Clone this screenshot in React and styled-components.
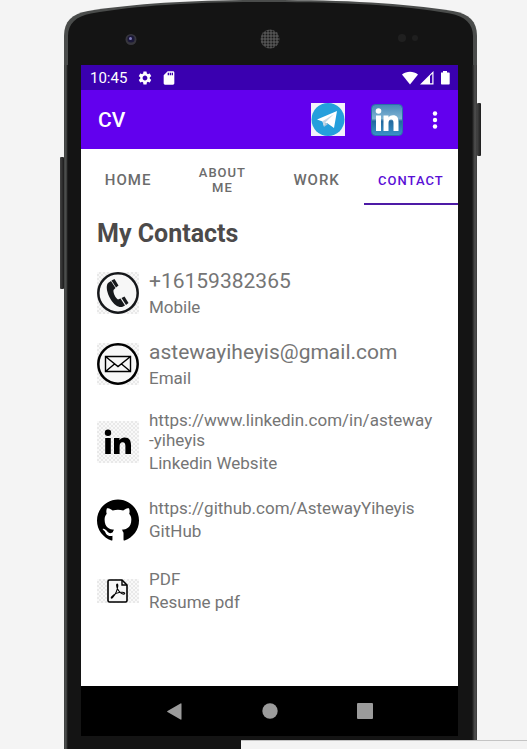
import React from "react";
import styled, { createGlobalStyle } from "styled-components";
import { MdSettings, MdSdCard } from "react-icons/md";

const GlobalStyle = createGlobalStyle`
  * { box-sizing: border-box; }
  body { margin: 0; background: #f4f4f4; font-family: Roboto, "Noto Sans", sans-serif; }
  button { font: inherit; border: 0; padding: 0; background: none; cursor: pointer; }
  h1, h2, p, ul { margin: 0; padding: 0; }
  svg { display: block; }
`;

const Page = styled.div`
  min-height: 100vh;
  display: flex;
  padding: 0 50px 0 64px;
  overflow: hidden;
`;

const Phone = styled.div`
  position: relative;
  flex: 1;
  min-width: 0;
  display: flex;
  flex-direction: column;
`;

const TopBezel = styled.svg`
  width: 100%;
  height: 65px;
  flex: none;
`;

const Frame = styled.div`
  flex: 1;
  display: flex;
  flex-direction: column;
  padding: 0 19px 13px 17px;
  background: linear-gradient(
    to right,
    #3c3e3d 0, #505251 2px, #2a2b2a 3px, #141414 4px,
    #141414 calc(100% - 5px), #2a2a2a calc(100% - 4px), #505050 calc(100% - 2px), #3a3a3a 100%
  );
`;

const SideKey = styled.span`
  position: absolute;
  width: 4px;
  top: ${(p) => p.$top}px;
  height: ${(p) => p.$height}px;
  ${(p) => p.$side}: -4px;
  background: linear-gradient(to right, #444, #1c1c1c);
  border-radius: 1px;
`;

const Screen = styled.main`
  flex: 1;
  display: flex;
  flex-direction: column;
  background: #fff;
`;

const StatusBar = styled.div`
  height: 25px;
  display: flex;
  align-items: center;
  padding: 0 8px 0 9px;
  background: #3a00b0;
  color: #fff;
  font-size: 15px;
`;

const StatusGroup = styled.div`
  display: flex;
  align-items: center;
  gap: ${(p) => p.$gap}px;
  margin-left: ${(p) => (p.$end ? "auto" : "10px")};
`;

const AppBar = styled.header`
  height: 59px;
  display: flex;
  align-items: center;
  padding: 0 11px 0 17px;
  background: #6200ee;
  color: #fff;
`;

const AppTitle = styled.h1`
  flex: 1;
  font-size: 21px;
  font-weight: 500;
`;

const ActionButton = styled.button`
  display: grid;
  place-items: center;
  color: #fff;
  margin-left: ${(p) => p.$gap}px;
`;

const Tabs = styled.nav`
  height: 56px;
  display: grid;
  grid-template-columns: repeat(4, 1fr);
`;

const Tab = styled.button`
  padding: 8px 14px 0;
  color: ${(p) => (p.$active ? "#5a0fd6" : "#6c6c6c")};
  border-bottom: 2px solid ${(p) => (p.$active ? "#4d1aa6" : "transparent")};
  font-size: ${(p) => (p.$small ? 13 : 15)}px;
  line-height: 15px;
  font-weight: 500;
  letter-spacing: 1px;
  white-space: ${(p) => (p.$wrap ? "normal" : "nowrap")};
  text-transform: uppercase;
`;

const Content = styled.section`
  flex: 1;
  padding: 14px 16px 16px;
`;

const Heading = styled.h2`
  font-size: 25px;
  line-height: 30px;
  font-weight: 700;
  color: #4c4a4a;
  margin-bottom: 19px;
`;

const ContactList = styled.ul`
  list-style: none;
  display: flex;
  flex-direction: column;
  gap: 22px;
`;

const ContactRow = styled.li`
  min-height: 49px;
  display: flex;
  align-items: center;
  gap: 10px;
`;

const IconTile = styled.span`
  flex: none;
  width: 42px;
  height: ${(p) => (p.$short ? 24 : 42)}px;
  display: grid;
  place-items: center;
  color: #000;
  background: ${(p) =>
    p.$plain ? "none" : "repeating-conic-gradient(#e9e9e9 0 25%, #f9f9f9 0 50%) 0 0 / 4px 4px"};
`;

const ContactText = styled.div`
  min-width: 0;
  display: flex;
  flex-direction: column;
  gap: 3px;
  color: #757575;
  font-size: 17px;
  line-height: 20px;
`;

const Value = styled.a`
  color: inherit;
  text-decoration: none;
  font-size: ${(p) => (p.$large ? 21 : 17)}px;
  line-height: ${(p) => (p.$large ? 26 : 20)}px;
`;

const KeepTogether = styled.span`
  white-space: nowrap;
`;

const NavBar = styled.div`
  height: 50px;
  display: grid;
  grid-template-columns: repeat(3, 1fr);
  padding: 0 46px;
  background: #000;
`;

const NavButton = styled.button`
  display: grid;
  place-items: center;
`;

const Panel = styled.div`
  position: fixed;
  left: 241px;
  right: 0;
  bottom: 0;
  height: 9px;
  background: #f3f3f3;
  border-top: 1px solid #c4c4c4;
`;

function Bezel() {
  return (
    <TopBezel viewBox="0 0 413 65" preserveAspectRatio="none" aria-hidden="true">
      <defs>
        <pattern id="mesh" width="3" height="3" patternUnits="userSpaceOnUse">
          <rect width="3" height="3" fill="#555" />
          <circle cx="1.5" cy="1.5" r="1" fill="#191919" />
        </pattern>
      </defs>
      <path d="M0 65V36C0 21 8 14 24 11 75 3 130 0 206 0S338 3 389 11C405 14 413 21 413 36V65Z" fill="#4a4c4b" />
      <path d="M4 65V36C4 24 12 16 27 13.500 77 5 132 2 206 2S336 5 386 13.500C401 16 409 24 409 36V65Z" fill="#141414" />
      <circle cx="67" cy="39.500" r="5.500" fill="#37363d" />
      <circle cx="67" cy="39" r="3.600" fill="#1b1838" />
      <circle cx="66.500" cy="38.500" r="1.500" fill="#7d79b5" />
      <circle cx="206" cy="39" r="9.500" fill="url(#mesh)" />
      <circle cx="338" cy="38" r="4" fill="#202020" />
      <circle cx="351" cy="38" r="3" fill="#1f1f1f" />
    </TopBezel>
  );
}

function TelegramIcon() {
  return (
    <svg width="34" height="33" viewBox="0 0 34 33" aria-hidden="true">
      <rect width="34" height="33" fill="#f3f2fa" />
      <circle cx="17" cy="16.500" r="16.500" fill="#259fdc" />
      <path d="M6 16.500 26 8 23 25 16 20 13 23 11.500 18.500Z" fill="#fff" />
      <path d="M11.500 18.300 23 11 14.300 19.500 13 24Z" fill="#c5d8e6" />
      <path d="M14.300 19.500 17 21 13 24Z" fill="#a7c4d8" />
    </svg>
  );
}

function LinkedinBadge() {
  return (
    <svg width="32" height="32" viewBox="0 0 32 32" aria-hidden="true">
      <defs>
        <linearGradient id="badge" x1="0" y1="0" x2="0" y2="1">
          <stop offset="0" stopColor="#4487b8" />
          <stop offset="0.450" stopColor="#7fb3d3" />
          <stop offset="0.540" stopColor="#22699f" />
          <stop offset="1" stopColor="#3a93c9" />
        </linearGradient>
      </defs>
      <rect x="0.500" y="0.500" width="31" height="31" rx="4" fill="url(#badge)" stroke="#2a70a8" />
      <circle cx="7.500" cy="7" r="2.800" fill="#fff" />
      <path d="M5 11.500h5V27H5zM12.500 11.500h5v2c1-1.500 2.500-2.300 4.500-2.300 4 0 5.500 2.600 5.500 6.800v9h-5v-8c0-2.300-.7-3.600-2.300-3.600-1.900 0-2.700 1.500-2.700 3.600v8h-5z" fill="#fff" />
    </svg>
  );
}

function LinkedinMark() {
  return (
    <svg width="28" height="26" viewBox="0 0 28 26" fill="#000" aria-hidden="true">
      <circle cx="4" cy="3.700" r="3.200" />
      <path d="M1.200 9h5.600v16H1.200zM10 9h5.500v2.200c1-1.700 3-2.700 5-2.700 5 0 6.500 3.300 6.500 7.700V25h-5.600v-7.700c0-2.300-.5-4.100-2.700-4.100-2.300 0-3.100 1.700-3.100 4.100V25H10z" />
    </svg>
  );
}

function PhoneIcon() {
  return (
    <svg width="42" height="42" viewBox="0 0 42 42" aria-hidden="true">
      <circle cx="21" cy="21" r="19.700" fill="#f7f7f7" stroke="#15171a" strokeWidth="2.500" />
      <g fill="#17191c">
        <path d="M14 9 11 11C8.500 14 10 21 13.500 27S21 35.500 25 35L28 33.500 23.500 26.500 21 27.500C18.500 26 16 21 16.500 18L18.500 16Z" />
        <path d="M14.500 8.500 17.500 7 21.500 13.500 19 15.500Z" />
        <path d="M24.500 26 27.500 24.500 31.500 31 29 33Z" />
      </g>
    </svg>
  );
}

function MailIcon() {
  return (
    <svg width="42" height="42" viewBox="0 0 42 42" fill="none" stroke="#000" aria-hidden="true">
      <circle cx="21" cy="21" r="19.700" fill="#f7f7f7" strokeWidth="2.500" />
      <path d="M8.500 13.500h25v15h-25zM8.500 13.500 21 23.500 33.500 13.500M8.500 28.500 17.500 21M33.500 28.500 24.500 21" strokeWidth="1.400" />
    </svg>
  );
}

function GithubIcon() {
  return (
    <svg width="42" height="42" viewBox="0 0 24 24" fill="#000" aria-hidden="true">
      <path d="M12 .297c-6.630 0-12 5.373-12 12 0 5.303 3.438 9.800 8.205 11.385.6.113.82-.258.82-.577 0-.285-.01-1.040-.015-2.040-3.338.724-4.042-1.610-4.042-1.610C4.422 18.070 3.633 17.700 3.633 17.700c-1.087-.744.084-.729.084-.729 1.205.084 1.838 1.236 1.838 1.236 1.070 1.835 2.809 1.305 3.495.998.108-.776.417-1.305.76-1.605-2.665-.3-5.466-1.332-5.466-5.930 0-1.310.465-2.380 1.235-3.220-.135-.303-.54-1.523.105-3.176 0 0 1.005-.322 3.300 1.230.96-.267 1.980-.399 3-.405 1.020.006 2.040.138 3 .405 2.280-1.552 3.285-1.230 3.285-1.230.645 1.653.24 2.873.12 3.176.765.84 1.230 1.910 1.230 3.220 0 4.610-2.805 5.625-5.475 5.920.42.36.81 1.096.81 2.220v3.286c0 .315.21.69.825.57C20.565 22.092 24 17.592 24 12.297c0-6.627-5.373-12-12-12" />
      <path d="M8.900 19h6.200v5H8.900z" fill="#fff" />
    </svg>
  );
}

function PdfIcon() {
  return (
    <svg width="22" height="24" viewBox="0 0 22 24" fill="none" stroke="#000" aria-hidden="true">
      <path d="M2.500 1H15l5 5v15.500q0 1.500-1.500 1.500h-16Q1 23 1 21.500v-19Q1 1 2.500 1Z" fill="#f7f7f7" strokeWidth="1.600" />
      <path d="M15 1v5h5" strokeWidth="1.400" />
      <path d="M10.300 5c-1 0-.8 2.500.3 5 1.400 3 4.600 5.700 6.700 5 1-.5.2-1.700-2-1.700-4 0-8.500 2-10.600 4.500-1 1.300-.2 1.700.8.700 2.500-2.500 5-8 5.300-11.700 0-1.200-.1-1.800-.5-1.800Z" strokeWidth="1.100" />
    </svg>
  );
}

function MoreIcon() {
  return (
    <svg width="24" height="24" viewBox="0 0 24 24" fill="#fff" aria-hidden="true">
      <circle cx="12" cy="5.500" r="2.200" />
      <circle cx="12" cy="12" r="2.200" />
      <circle cx="12" cy="18.500" r="2.200" />
    </svg>
  );
}

const tabs = [
  { label: "Home" },
  { label: "About Me", small: true, wrap: true },
  { label: "Work" },
  { label: "Contact", small: true, active: true },
];

const contacts = [
  { label: "Mobile", value: "+16159382365", href: "tel:+16159382365", large: true, icon: <PhoneIcon /> },
  { label: "Email", value: "astewayiheyis@gmail.com", href: "mailto:astewayiheyis@gmail.com", large: true, icon: <MailIcon /> },
  {
    label: "Linkedin Website",
    value: (
      <>
        https://www.linkedin.com/in/asteway
        <wbr />
        <KeepTogether>-yiheyis</KeepTogether>
      </>
    ),
    href: "https://www.linkedin.com/in/asteway-yiheyis",
    icon: <LinkedinMark />,
  },
  { label: "GitHub", value: "https://github.com/AstewayYiheyis", href: "https://github.com/AstewayYiheyis", plain: true, icon: <GithubIcon /> },
  { label: "Resume pdf", value: "PDF", href: "#resume", short: true, icon: <PdfIcon /> },
];

export default function App() {
  return (
    <>
      <GlobalStyle />
      <Page>
        <Phone>
          <SideKey $side="left" $top={157} $height={132} />
          <SideKey $side="right" $top={103} $height={53} />
          <Bezel />
          <Frame>
            <Screen>
              <StatusBar>
                <span>10:45</span>
                <StatusGroup $gap={8}>
                  <MdSettings size={16} />
                  <MdSdCard size={16} />
                </StatusGroup>
                <StatusGroup $gap={2} $end>
                  <svg width="16" height="14" viewBox="0 0 16 14" fill="#fff" aria-hidden="true">
                    <path d="M0 3.500C4.500-.3 11.500-.3 16 3.500L8 13.500Z" />
                  </svg>
                  <svg width="14" height="14" viewBox="0 0 14 14" fill="#fff" aria-hidden="true">
                    <path d="M0 13.500 13.500 0v13.500ZM10 5v7.300h2.300V2.800Z" fillRule="evenodd" />
                  </svg>
                  <svg width="14" height="14" viewBox="0 0 14 14" fill="#fff" aria-hidden="true">
                    <path d="M5 1.500h2V0h4v1.500h2q.7 0 .7.700v10.600q0 .7-.7.700H5.700q-.7 0-.7-.7Z" />
                  </svg>
                </StatusGroup>
              </StatusBar>
              <AppBar>
                <AppTitle>CV</AppTitle>
                <ActionButton aria-label="Telegram"><TelegramIcon /></ActionButton>
                <ActionButton aria-label="LinkedIn" $gap={26}><LinkedinBadge /></ActionButton>
                <ActionButton aria-label="More options" $gap={20}><MoreIcon /></ActionButton>
              </AppBar>
              <Tabs>
                {tabs.map((t) => (
                  <Tab key={t.label} $small={t.small} $wrap={t.wrap} $active={t.active}>
                    {t.label}
                  </Tab>
                ))}
              </Tabs>
              <Content>
                <Heading>My Contacts</Heading>
                <ContactList>
                  {contacts.map((c) => (
                    <ContactRow key={c.label}>
                      <IconTile $plain={c.plain} $short={c.short}>{c.icon}</IconTile>
                      <ContactText>
                        <Value href={c.href} $large={c.large}>{c.value}</Value>
                        <p>{c.label}</p>
                      </ContactText>
                    </ContactRow>
                  ))}
                </ContactList>
              </Content>
              <NavBar>
                <NavButton aria-label="Back">
                  <svg width="17" height="17" viewBox="0 0 17 17" fill="#9b9b9b" aria-hidden="true">
                    <path d="M1.500 8 14.500.5q1-.5 1 .5v15q0 1-1 .5L1.500 9q-1-.5 0-1Z" />
                  </svg>
                </NavButton>
                <NavButton aria-label="Home screen">
                  <svg width="16" height="16" viewBox="0 0 16 16" fill="#9b9b9b" aria-hidden="true">
                    <circle cx="8" cy="8" r="7.700" />
                  </svg>
                </NavButton>
                <NavButton aria-label="Recent apps">
                  <svg width="16" height="16" viewBox="0 0 16 16" fill="#9b9b9b" aria-hidden="true">
                    <rect width="16" height="16" rx="1" />
                  </svg>
                </NavButton>
              </NavBar>
            </Screen>
          </Frame>
        </Phone>
        <Panel />
      </Page>
    </>
  );
}
